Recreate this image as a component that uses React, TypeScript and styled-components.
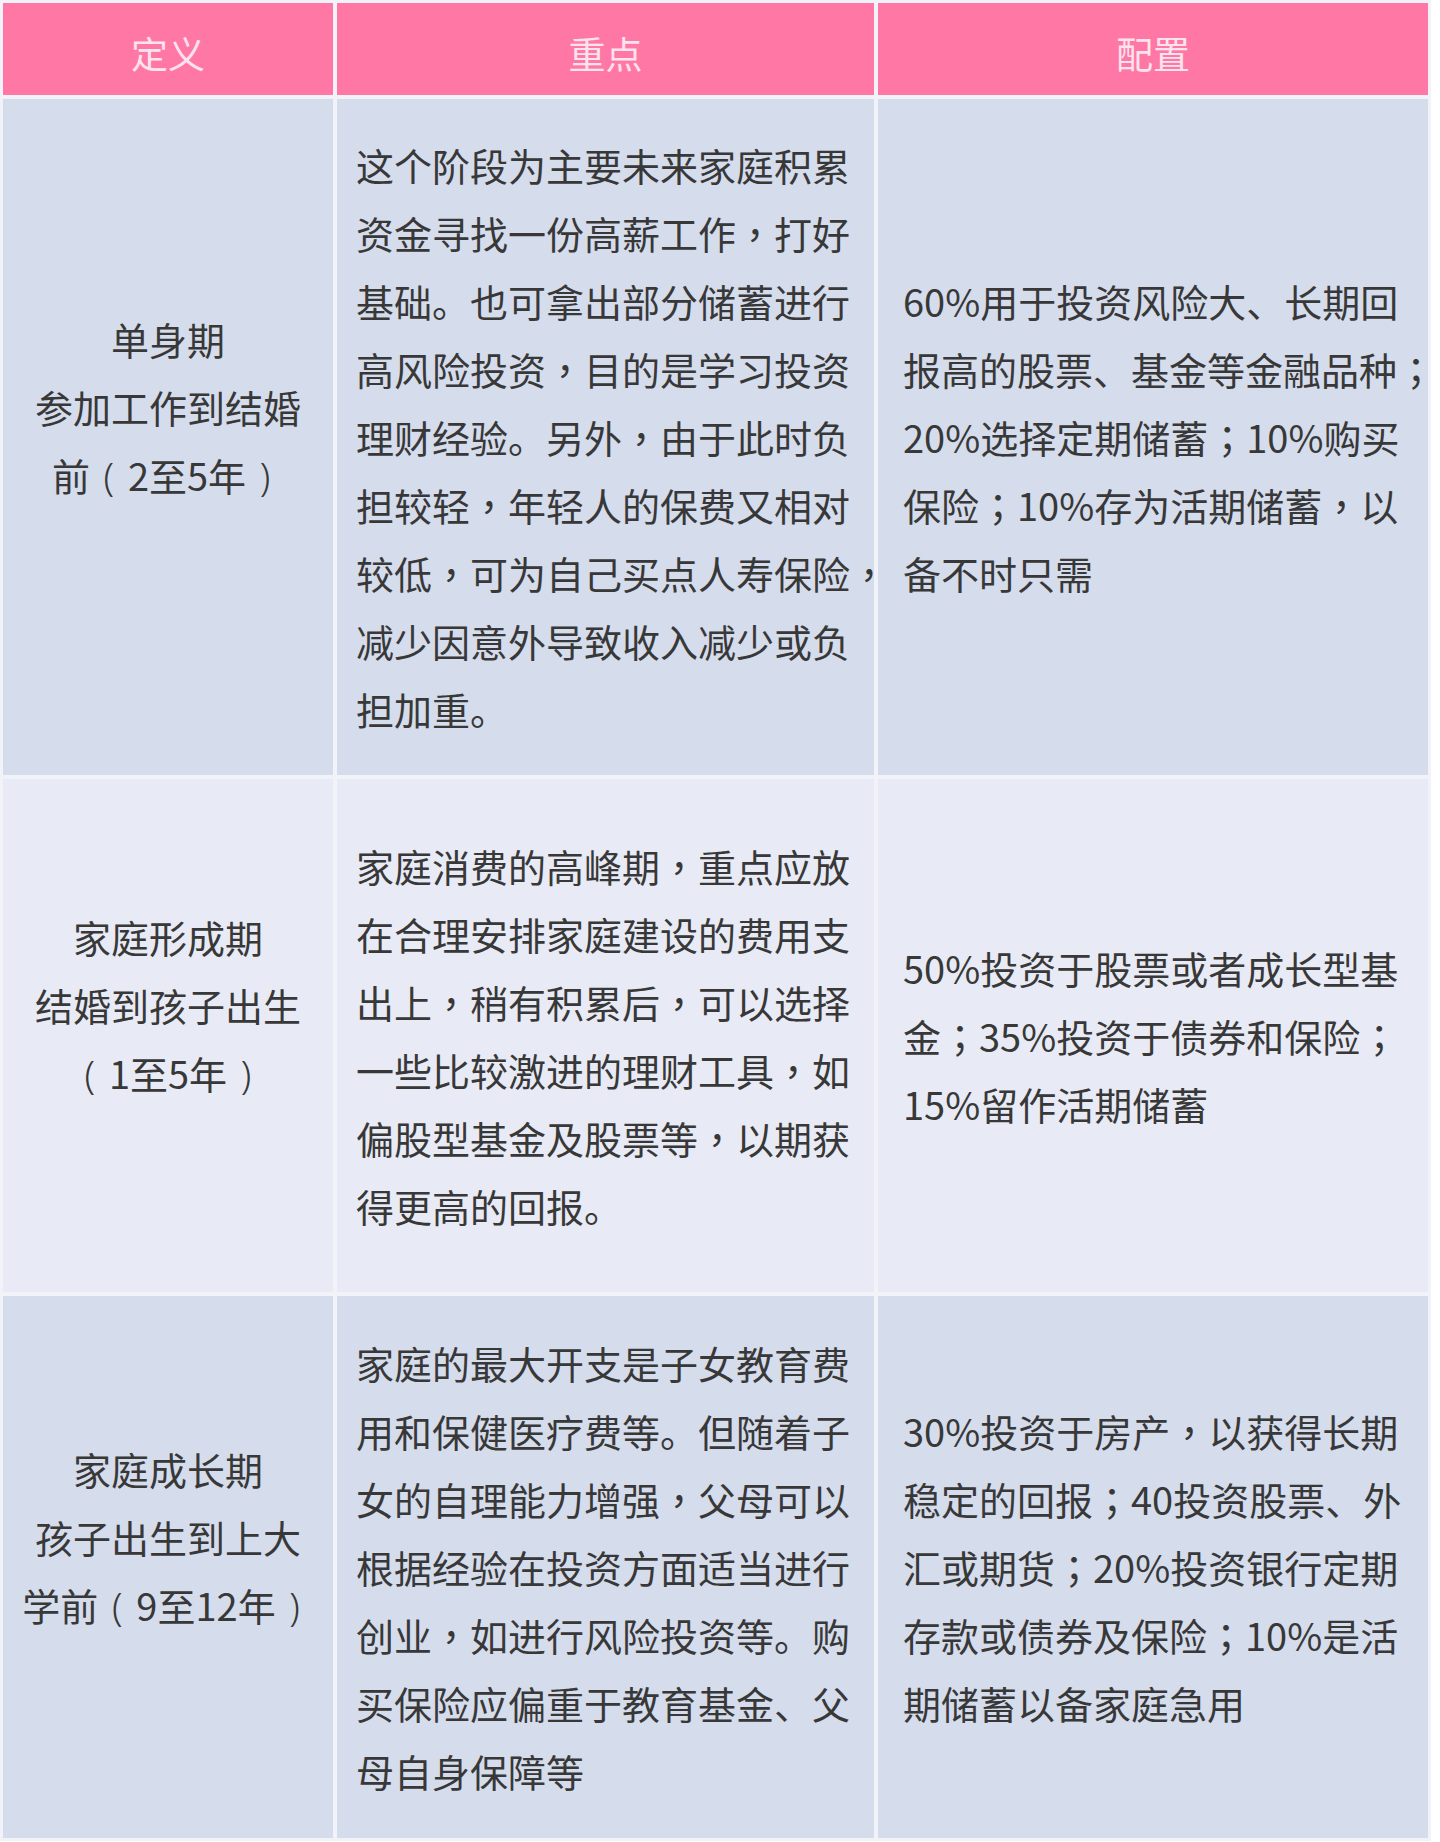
import styled, { createGlobalStyle } from 'styled-components';

const GlobalStyle = createGlobalStyle`
  html, body {
    margin: 0;
    padding: 0;
    background: #ffffff;
  }
  body {
    font-family: "Noto Sans CJK SC", "Noto Sans", sans-serif;
    color: #383838;
  }
`;

type Tone = 'deep' | 'pale';

interface Stage {
  definition: string[];
  focus: string[];
  allocation: string[];
  tone: Tone;
}

const stages: Stage[] = [
  {
    tone: 'deep',
    definition: ['单身期', '参加工作到结婚', '前（2至5年）'],
    focus: [
      '这个阶段为主要未来家庭积累',
      '资金寻找一份高薪工作，打好',
      '基础。也可拿出部分储蓄进行',
      '高风险投资，目的是学习投资',
      '理财经验。另外，由于此时负',
      '担较轻，年轻人的保费又相对',
      '较低，可为自己买点人寿保险，',
      '减少因意外导致收入减少或负',
      '担加重。',
    ],
    allocation: [
      '60%用于投资风险大、长期回',
      '报高的股票、基金等金融品种；',
      '20%选择定期储蓄；10%购买',
      '保险；10%存为活期储蓄，以',
      '备不时只需',
    ],
  },
  {
    tone: 'pale',
    definition: ['家庭形成期', '结婚到孩子出生', '（1至5年）'],
    focus: [
      '家庭消费的高峰期，重点应放',
      '在合理安排家庭建设的费用支',
      '出上，稍有积累后，可以选择',
      '一些比较激进的理财工具，如',
      '偏股型基金及股票等，以期获',
      '得更高的回报。',
    ],
    allocation: [
      '50%投资于股票或者成长型基',
      '金；35%投资于债券和保险；',
      '15%留作活期储蓄',
    ],
  },
  {
    tone: 'deep',
    definition: ['家庭成长期', '孩子出生到上大', '学前（9至12年）'],
    focus: [
      '家庭的最大开支是子女教育费',
      '用和保健医疗费等。但随着子',
      '女的自理能力增强，父母可以',
      '根据经验在投资方面适当进行',
      '创业，如进行风险投资等。购',
      '买保险应偏重于教育基金、父',
      '母自身保障等',
    ],
    allocation: [
      '30%投资于房产，以获得长期',
      '稳定的回报；40投资股票、外',
      '汇或期货；20%投资银行定期',
      '存款或债券及保险；10%是活',
      '期储蓄以备家庭急用',
    ],
  },
];

const Table = styled.div`
  display: grid;
  grid-template-columns: 330px 537px 550px;
  grid-template-rows: 92px 676px 513px 542px;
  gap: 4px;
  padding: 3px;
  width: fit-content;
  background: #f1f3f9;
`;

const HeadCell = styled.div`
  display: flex;
  align-items: center;
  justify-content: center;
  padding-top: 8px;
  background: #ff78a5;
  color: #fde3ee;
  font-size: 37px;
`;

const Cell = styled.div<{ $tone: Tone; $align: 'center' | 'left'; $padLeft: number; $lift: number }>`
  display: flex;
  flex-direction: column;
  justify-content: center;
  align-items: ${(p) => (p.$align === 'center' ? 'center' : 'flex-start')};
  padding-left: ${(p) => p.$padLeft}px;
  padding-bottom: ${(p) => p.$lift}px;
  background: ${(p) => (p.$tone === 'deep' ? '#d5dcec' : '#e8ebf5')};
  font-size: 38px;
  line-height: 68px;
  color: #383838;
  overflow: visible;
`;

const Line = styled.div`
  white-space: nowrap;
`;

// centred full-width punctuation, as in the source image
const Punct = styled.span`
  font-family: "Noto Sans CJK TC", "Noto Sans CJK SC", sans-serif;
`;

// brackets sit in the middle of a full-width box
const Bracket = styled.span`
  display: inline-block;
  width: 1em;
  text-align: center;
  font-family: "Noto Sans", sans-serif;
  font-weight: 300;
`;

const CENTRED = /([，；（）])/;

function renderLine(text: string) {
  return text.split(CENTRED).map((part, i) => {
    if (part === '（') return <Bracket key={i}>(</Bracket>;
    if (part === '）') return <Bracket key={i}>)</Bracket>;
    return CENTRED.test(part) ? <Punct key={i}>{part}</Punct> : part;
  });
}

function Lines({ items }: { items: string[] }) {
  return (
    <>
      {items.map((text, i) => (
        <Line key={i}>{renderLine(text)}</Line>
      ))}
    </>
  );
}

function StageRow({ stage }: { stage: Stage }) {
  return (
    <>
      <Cell $tone={stage.tone} $align="center" $padLeft={0} $lift={60}>
        <Lines items={stage.definition} />
      </Cell>
      <Cell $tone={stage.tone} $align="left" $padLeft={19} $lift={0}>
        <Lines items={stage.focus} />
      </Cell>
      <Cell $tone={stage.tone} $align="left" $padLeft={25} $lift={0}>
        <Lines items={stage.allocation} />
      </Cell>
    </>
  );
}

export default function App() {
  return (
    <>
      <GlobalStyle />
      <Table>
        <HeadCell>定义</HeadCell>
        <HeadCell>重点</HeadCell>
        <HeadCell>配置</HeadCell>

        {stages.map((stage, i) => (
          <StageRow key={i} stage={stage} />
        ))}
      </Table>
    </>
  );
}
